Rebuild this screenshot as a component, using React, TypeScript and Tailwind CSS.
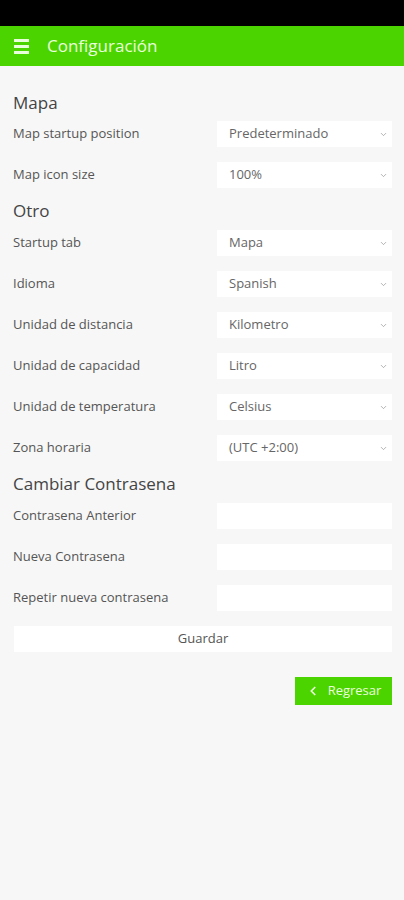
import { ChevronDown, ChevronLeft } from 'lucide-react'

const mapRows = [
  { label: 'Map startup position', value: 'Predeterminado' },
  { label: 'Map icon size', value: '100%' }
]

const otherRows = [
  { label: 'Startup tab', value: 'Mapa' },
  { label: 'Idioma', value: 'Spanish' },
  { label: 'Unidad de distancia', value: 'Kilometro' },
  { label: 'Unidad de capacidad', value: 'Litro' },
  { label: 'Unidad de temperatura', value: 'Celsius' },
  { label: 'Zona horaria', value: '(UTC +2:00)' }
]

const passwordRows = ['Contrasena Anterior', 'Nueva Contrasena', 'Repetir nueva contrasena']

const SelectRow = ({ label, value }: { label: string; value: string }) => (
  <div className="flex items-center h-[26px]">
    <span className="flex-1 text-[13px] text-[#555]">{label}</span>
    <div className="w-[175px] h-[26px] bg-white flex items-center pl-[12px] pr-[4px]">
      <span className="flex-1 text-[13px] text-[#666]">{value}</span>
      <ChevronDown size={9} strokeWidth={2} className="text-[#999]" />
    </div>
  </div>
)

const InputRow = ({ label }: { label: string }) => (
  <div className="flex items-center h-[26px]">
    <span className="flex-1 text-[13px] text-[#555]">{label}</span>
    <div className="w-[175px] h-[26px] bg-white" />
  </div>
)

const Heading = ({ children }: { children: string }) => (
  <h2 className="text-[17px] leading-[24px] text-[#444]">{children}</h2>
)

export default function App() {
  return (
    <div className="min-h-[900px] w-[404px] bg-[#f7f7f7]" style={{ fontFamily: '"Open Sans", sans-serif' }}>
      <div className="h-[26px] bg-black" />
      <header className="h-[40px] bg-[#4cd400] flex items-center pl-[14px]">
        <div className="flex flex-col gap-[3px] w-[15px]">
          <span className="h-[3px] bg-[#e9ffdc]" />
          <span className="h-[3px] bg-[#e9ffdc]" />
          <span className="h-[3px] bg-[#e9ffdc]" />
        </div>
        <span className="ml-[18px] text-[17px] text-[#eaffdc]">Configuración</span>
      </header>
      <main className="pl-[13px] pr-[12px] pt-[25px]">
        <Heading>Mapa</Heading>
        <div className="mt-[6px] flex flex-col gap-[15px]">
          {mapRows.map(r => (
            <SelectRow key={r.label} {...r} />
          ))}
        </div>
        <div className="mt-[11px]">
          <Heading>Otro</Heading>
        </div>
        <div className="mt-[7px] flex flex-col gap-[15px]">
          {otherRows.map(r => (
            <SelectRow key={r.label} {...r} />
          ))}
        </div>
        <div className="mt-[11px]">
          <Heading>Cambiar Contrasena</Heading>
        </div>
        <div className="mt-[7px] flex flex-col gap-[15px]">
          {passwordRows.map(l => (
            <InputRow key={l} label={l} />
          ))}
        </div>
        <button className="mt-[15px] ml-px w-[378px] h-[26px] bg-white text-[13px] text-[#555]">Guardar</button>
        <div className="mt-[25px] flex justify-end">
          <button className="w-[97px] h-[28px] bg-[#4cd400] flex items-center justify-center gap-[8px] text-[13px] text-[#eaffdc]">
            <ChevronLeft size={14} strokeWidth={3} />
            Regresar
          </button>
        </div>
      </main>
    </div>
  )
}
